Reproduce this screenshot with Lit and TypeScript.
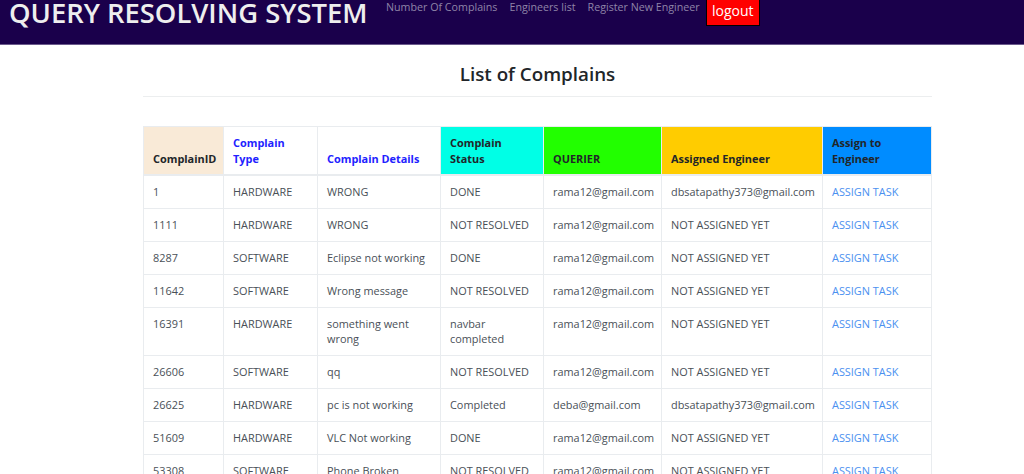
import { LitElement, html, css } from "lit";
import { customElement } from "lit/decorators.js";

const A = "NOT ASSIGNED YET";
const R = "rama12@gmail.com";
const D = "dbsatapathy373@gmail.com";
const rows: string[][] = [
  ["1", "HARDWARE", "WRONG", "DONE", R, D],
  ["1111", "HARDWARE", "WRONG", "NOT RESOLVED", R, A],
  ["8287", "SOFTWARE", "Eclipse not working", "DONE", R, A],
  ["11642", "SOFTWARE", "Wrong message", "NOT RESOLVED", R, A],
  ["16391", "HARDWARE", "something went wrong", "navbar completed", R, A],
  ["26606", "SOFTWARE", "qq", "NOT RESOLVED", R, A],
  ["26625", "HARDWARE", "pc is not working", "Completed", "deba@gmail.com", D],
  ["51609", "HARDWARE", "VLC Not working", "DONE", R, A],
  ["53308", "SOFTWARE", "Phone Broken", "NOT RESOLVED", R, A],
];

@customElement("app-root")
export class AppRoot extends LitElement {
  static styles = css`
    :host {
      display: block;
      height: 474px;
      overflow: hidden;
      background: #fff;
      font-family: "Open Sans", "Noto Sans", sans-serif;
      color: #212529;
    }
    .nav {
      height: 44px;
      background: #1a004b;
      border-bottom: 1px solid #6b5a8c;
      display: flex;
      align-items: flex-start;
      padding-left: 9px;
      overflow: hidden;
    }
    .brand {
      font-size: 27.4px;
      line-height: 28px;
      color: #eeeeee;
      margin-top: -1px;
      font-weight: 600;
      white-space: nowrap;
      width: 377px;
    }
    .links {
      display: flex;
      gap: 12px;
      font-size: 10.7px;
      line-height: 15px;
      color: #8f84a8;
      white-space: nowrap;
    }
    .logout {
      margin-left: 6px;
      width: 54px;
      height: 26px;
      box-sizing: border-box;
      background: #f00;
      color: #fff;
      border: 1px solid #000;
      border-top: 0;
      font-size: 14px;
      line-height: 21px;
      text-align: center;
    }
    .main {
      width: 789px;
      margin-left: 143px;
    }
    h1 {
      margin: 0;
      height: 52px;
      box-sizing: border-box;
      padding-top: 17px;
      text-align: center;
      font-size: 18.8px;
      line-height: 24px;
      font-weight: 600;
      color: #212529;
      border-bottom: 1px solid #eceeef;
    }
    table {
      margin-top: 29px;
      width: 789px;
      table-layout: fixed;
      border-collapse: collapse;
      font-size: 10.9px;
      line-height: 16px;
      color: #495057;
    }
    th, td {
      box-sizing: border-box;
      border: 1px solid #e9ecef;
      padding: 8px 9px;
      vertical-align: top;
      text-align: left;
    }
    th {
      vertical-align: bottom;
      font-weight: 700;
      color: #212529;
      border-bottom-width: 2px;
      padding-bottom: 7px;
    }
    td {
      height: 33px;
      line-height: 15.5px;
    }
    .c1 { width: 80px; background: #f9ead7; }
    .c2 { width: 94px; color: #2222ff; }
    .c3 { width: 123px; color: #2222ff; }
    .c4 { width: 103px; background: #00ffe6; }
    .c5 { width: 118px; background: #22ff00; }
    .c6 { width: 161px; background: #ffcc00; }
    .c7 { background: #008cff; }
    td.link { color: #4a90f0; }
  `;

  render() {
    return html`
      <div class="nav">
        <div class="brand">QUERY RESOLVING SYSTEM</div>
        <div class="links">
          <a>Number Of Complains</a>
          <a>Engineers list</a>
          <a>Register New Engineer</a>
        </div>
        <div class="logout">logout</div>
      </div>
      <div class="main">
        <h1>List of Complains</h1>
        <table>
          <thead>
            <tr>
              <th class="c1">ComplainID</th>
              <th class="c2">Complain Type</th>
              <th class="c3">Complain Details</th>
              <th class="c4">Complain Status</th>
              <th class="c5">QUERIER</th>
              <th class="c6">Assigned Engineer</th>
              <th class="c7">Assign to Engineer</th>
            </tr>
          </thead>
          <tbody>
            ${rows.map(
              (r) => html`<tr>
                ${r.map((c) => html`<td>${c}</td>`)}
                <td class="link">ASSIGN TASK</td>
              </tr>`
            )}
          </tbody>
        </table>
      </div>
    `;
  }
}
